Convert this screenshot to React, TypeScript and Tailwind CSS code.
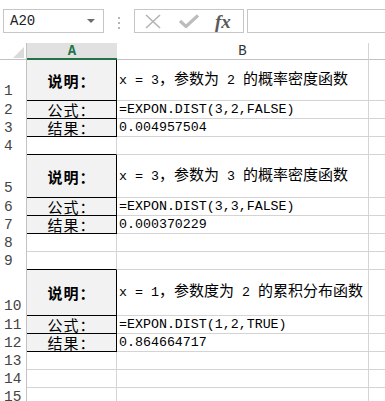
const mono = { fontFamily: '"Liberation Mono", "Noto Sans CJK SC", monospace' }

type Row = {
  n: number
  h: string
  a?: string
  b?: string
  boxed?: boolean
  bold?: boolean
  edgeBelow?: boolean
}

const rows: Row[] = [
  { n: 1, h: "h-[41px]", a: "说明：", b: "x = 3，参数为 2 的概率密度函数", boxed: true, bold: true },
  { n: 2, h: "h-[18px]", a: "公式：", b: "=EXPON.DIST(3,2,FALSE)", boxed: true },
  { n: 3, h: "h-[18px]", a: "结果：", b: "0.004957504", boxed: true },
  { n: 4, h: "h-[18px]", edgeBelow: true },
  { n: 5, h: "h-[43px]", a: "说明：", b: "x = 3，参数为 3 的概率密度函数", boxed: true, bold: true },
  { n: 6, h: "h-[18px]", a: "公式：", b: "=EXPON.DIST(3,3,FALSE)", boxed: true },
  { n: 7, h: "h-[18px]", a: "结果：", b: "0.000370229", boxed: true },
  { n: 8, h: "h-[18px]" },
  { n: 9, h: "h-[18px]", edgeBelow: true },
  { n: 10, h: "h-[46px]", a: "说明：", b: "x = 1，参数度为 2 的累积分布函数", boxed: true, bold: true },
  { n: 11, h: "h-[18px]", a: "公式：", b: "=EXPON.DIST(1,2,TRUE)", boxed: true },
  { n: 12, h: "h-[18px]", a: "结果：", b: "0.864664717", boxed: true },
  { n: 13, h: "h-[18px]" },
  { n: 14, h: "h-[18px]" },
  { n: 15, h: "h-[18px]" },
]

// ASCII runs get the narrower mono size, CJK stays at full size
function Mixed({ text }: { text: string }) {
  const parts = text.split(/([\x00-\x7f]+)/).filter(Boolean)
  return (
    <>
      {parts.map((p, i) =>
        /^[\x00-\x7f]+$/.test(p) ? (
          <span key={i} className="whitespace-pre text-[13.3px]">{p}</span>
        ) : (
          <span key={i} className="text-[15px]">{p}</span>
        )
      )}
    </>
  )
}

function TopBar() {
  return (
    <div className="flex h-[43px] items-start pt-[9px] bg-white">
      <div className="ml-[3px] flex h-[24px] w-[101px] items-center border border-[#c6c6c6] px-[6px]">
        <span className="flex-1 text-[14px] text-[#222]" style={mono}>A20</span>
        <span className="mr-[2px] h-0 w-0 border-x-[4px] border-t-[4px] border-x-transparent border-t-[#6d6d6d]" />
      </div>
      <div className="ml-[14px] mt-[8px] flex flex-col gap-[3px]">
        <span className="h-[2px] w-[2px] bg-[#b5b5b5]" />
        <span className="h-[2px] w-[2px] bg-[#b5b5b5]" />
        <span className="h-[2px] w-[2px] bg-[#b5b5b5]" />
      </div>
      <div className="ml-[14px] flex h-[24px] w-[110px] items-center border border-[#c6c6c6]">
        <svg width="18" height="15" viewBox="0 0 18 15" className="ml-[9px]">
          <path d="M2 1 L16 14 M16 1 L2 14" stroke="#b4b4b4" strokeWidth="1.6" fill="none" />
        </svg>
        <svg width="20" height="14" viewBox="0 0 20 14" className="ml-[17px]">
          <path d="M1 7 L7 12.5 L19 1.5" stroke="#bcbcbc" strokeWidth="3.2" fill="none" />
        </svg>
        <span
          className="ml-[16px] text-[19px] font-bold italic leading-none text-[#5a5a5a]"
          style={{ fontFamily: '"Liberation Serif", serif' }}
        >
          fx
        </span>
      </div>
      <div className="ml-[3px] h-[24px] flex-1 border border-r-0 border-[#c6c6c6]" />
    </div>
  )
}

function HeaderRow() {
  return (
    <div className="flex h-[17px]">
      <div className="relative w-[27px] border-b border-r border-[#c2c2c2]">
        <svg width="11" height="11" viewBox="0 0 11 11" className="absolute left-[13px] top-[4px]">
          <path d="M11 0 L11 11 L0 11 Z" fill="#dadada" />
        </svg>
      </div>
      <div className="flex w-[90px] items-center justify-center border-b-2 border-[#217346] bg-[#e1e1e1]">
        <span className="text-[14px] font-bold leading-none text-[#217346]" style={mono}>A</span>
      </div>
      <div className="flex w-[252px] items-center justify-center border-b border-r border-[#c2c2c2] border-r-[#d4d4d4]">
        <span className="text-[14px] leading-none text-[#333]" style={mono}>B</span>
      </div>
      <div className="flex-1 border-b border-[#c2c2c2]" />
    </div>
  )
}

function GridRow({ row }: { row: Row }) {
  const tall = row.h !== "h-[18px]"
  return (
    <div className={`flex ${row.h}`}>
      <div
        className={`flex w-[27px] border-r border-[#c2c2c2] pl-[4px] text-[14.5px] leading-[17px] text-[#444] ${tall ? "items-end pb-[1px]" : "items-center"}`}
        style={mono}
      >
        {row.n}
      </div>
      <div
        className={
          row.boxed
            ? "flex w-[90px] items-center justify-center border-b border-r border-black bg-[#f2f2f2]"
            : row.edgeBelow
            ? "w-[90px] border-b border-r border-b-black border-r-[#d4d4d4]"
            : "w-[90px] border-b border-r border-[#d4d4d4]"
        }
      >
        {row.a && (
          <span
            className={`text-[15px] leading-none tracking-[1px] text-black ${row.bold ? "font-bold" : ""}`}
            style={{ fontFamily: '"Noto Sans CJK SC", sans-serif' }}
          >
            {row.a}
          </span>
        )}
      </div>
      <div className="flex w-[252px] items-center overflow-hidden border-b border-r border-[#d4d4d4] pl-[2px]">
        {row.b && (
          <span className="whitespace-pre leading-[17px] text-black" style={mono}>
            <Mixed text={row.b} />
          </span>
        )}
      </div>
      <div className="flex-1 border-b border-[#d4d4d4]" />
    </div>
  )
}

export default function App() {
  return (
    <div className="h-[401px] w-[385px] overflow-hidden bg-white">
      <TopBar />
      <HeaderRow />
      {rows.map((r) => (
        <GridRow key={r.n} row={r} />
      ))}
    </div>
  )
}
